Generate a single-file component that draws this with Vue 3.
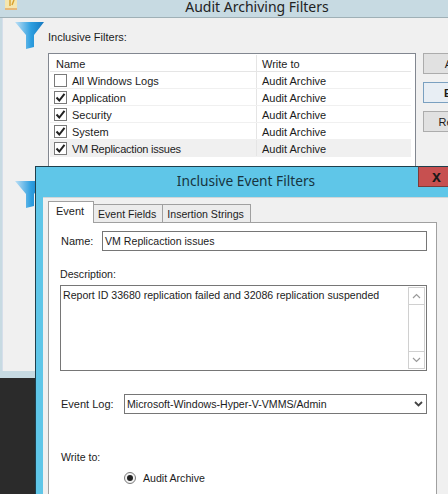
<script setup>
const rows = [
  { name: 'All Windows Logs', checked: false },
  { name: 'Application', checked: true },
  { name: 'Security', checked: true },
  { name: 'System', checked: true },
  { name: 'VM Replicaction issues', checked: true, selected: true }
]
const tabs = [
  { label: 'Event', active: true },
  { label: 'Event Fields' },
  { label: 'Insertion Strings' }
]
</script>

<template>
  <div class="desk">
    <section class="back">
      <header class="back-title">
        <svg class="doc" viewBox="0 0 12 10"><rect x="0" y="0" width="12" height="10" fill="#f4e6b0"/><path d="M5 0v6M9 0l-2 5" stroke="#d8a02c" stroke-width="1.4" fill="none"/><rect x="0" y="8" width="12" height="2" fill="#e8b878"/></svg>
        <span>Audit Archiving Filters</span>
      </header>
      <div class="back-body">
        <div class="filter-head">
          <svg class="funnel" viewBox="0 0 29 27">
            <defs>
              <linearGradient id="fg" x1="0" y1="0" x2="1" y2="0">
                <stop offset="0" stop-color="#bfe0f5"/>
                <stop offset="0.55" stop-color="#2e9fe0"/>
                <stop offset="1" stop-color="#1578c0"/>
              </linearGradient>
            </defs>
            <path d="M0 0H29L19 13V25L11 27V13Z" fill="url(#fg)"/>
          </svg>
          <span class="filter-label">Inclusive Filters:</span>
        </div>
        <div class="list-row">
          <div class="list">
            <div class="list-head">
              <span class="c1">Name</span>
              <span class="c2">Write to</span>
            </div>
            <div v-for="r in rows" :key="r.name" class="row" :class="{ sel: r.selected }">
              <span class="c1 cell-name">
                <span class="check">
                  <svg v-if="r.checked" viewBox="0 0 11 11"><path d="M1.5 5.5L4.3 8.5L9.5 1.8" fill="none" stroke="#222" stroke-width="2"/></svg>
                </span>
                <span :class="{ tight: r.selected }">{{ r.name }}</span>
              </span>
              <span class="c2">Audit Archive</span>
            </div>
          </div>
          <div class="side-btns">
            <button class="side">Add...</button>
            <button class="side focus">Edit...</button>
            <button class="side">Remove</button>
          </div>
        </div>
        <svg class="funnel second" viewBox="0 0 29 27">
          <path d="M0 0H29L19 13V25L11 27V13Z" fill="url(#fg)"/>
        </svg>
      </div>
      <div class="back-foot"></div>
    </section>

    <section class="dialog">
      <header class="dlg-title">
        <span>Inclusive Event Filters</span>
        <button class="close">x</button>
      </header>
      <div class="dlg-body">
        <nav class="tabs">
          <span v-for="t in tabs" :key="t.label" class="tab" :class="{ active: t.active }">{{ t.label }}</span>
        </nav>
        <div class="page">
          <div class="name-row">
            <label>Name:</label>
            <div class="field">VM Replicaction issues</div>
          </div>
          <label class="desc-label">Description:</label>
          <div class="area">
            <p>Report ID 33680 replication failed and 32086 replication suspended</p>
            <div class="scroll">
              <span class="sb-btn">
                <svg viewBox="0 0 9 6"><path d="M1 5L4.5 1.5L8 5" fill="none" stroke="#9a9a9a" stroke-width="1.2"/></svg>
              </span>
              <span class="sb-btn">
                <svg viewBox="0 0 9 6"><path d="M1 1L4.5 4.5L8 1" fill="none" stroke="#9a9a9a" stroke-width="1.2"/></svg>
              </span>
            </div>
          </div>
          <div class="log-row">
            <label>Event Log:</label>
            <div class="select">
              <span>Microsoft-Windows-Hyper-V-VMMS/Admin</span>
              <svg viewBox="0 0 9 6"><path d="M1 1L4.5 4.5L8 1" fill="none" stroke="#444" stroke-width="1.8"/></svg>
            </div>
          </div>
          <label class="write-label">Write to:</label>
          <div class="radio-row">
            <span class="radio"><i></i></span>
            <span>Audit Archive</span>
          </div>
        </div>
      </div>
    </section>
  </div>
</template>

<style>
html, body { margin: 0; padding: 0; background: #2b2b2b; }
</style>

<style scoped>
.desk {
  position: relative;
  width: 448px;
  height: 494px;
  overflow: hidden;
  background: #2b2b2b;
  font-family: "Liberation Sans", Arial, sans-serif;
  font-size: 11px;
  color: #1c1c1c;
}
.back {
  position: absolute;
  left: 0;
  top: -4px;
  width: 448px;
  height: 382px;
  display: flex;
  flex-direction: column;
  background: #c7dae2;
}
.back-title {
  position: relative;
  flex: none;
  height: 22px;
  display: flex;
  align-items: center;
  justify-content: center;
  padding-left: 66px;
  font-family: "Noto Sans", sans-serif;
  font-size: 14px;
  color: #222;
  border-bottom: 1px solid #9fb0b6;
  box-sizing: border-box;
}
.doc {
  position: absolute;
  left: 5px;
  top: 4px;
  width: 12px;
  height: 10px;
}
.back-body {
  position: relative;
  flex: 1;
  margin-left: 2px;
  background: #f0f0f0;
  border-left: 1px solid #d5deea;
  padding: 4px 0 0 12px;
}
.back-foot { flex: none; height: 7px; }
.filter-head {
  display: flex;
  align-items: flex-start;
  height: 31px;
}
.funnel {
  flex: none;
  width: 29px;
  height: 27px;
}
.filter-label {
  margin: 9px 0 0 4px;
}
.list-row {
  display: flex;
  margin-left: 33px;
}
.list {
  flex: none;
  width: 368px;
  height: 260px;
  box-sizing: border-box;
  border: 1px solid #828790;
  background: #fff;
  padding: 1px 4px 0 1px;
}
.list-head, .row {
  display: flex;
  height: 17px;
  line-height: 18px;
  box-sizing: border-box;
}
.list-head { border-bottom: 1px solid #e5e5e5; }
.row { border-bottom: 1px solid #f0f0f0; }
.row.sel { background: #f0f0f0; }
.c1 {
  flex: none;
  width: 207px;
  padding-left: 6px;
  box-sizing: border-box;
  border-right: 1px solid #e5e5e5;
}
.c2 { padding-left: 5px; }
.cell-name {
  display: flex;
  align-items: center;
  gap: 5px;
  padding-left: 4px;
  padding-top: 1px;
}
.tight { letter-spacing: -0.22px; }
.check {
  flex: none;
  width: 13px;
  height: 13px;
  box-sizing: border-box;
  border: 1px solid #7a7a7a;
  background: #fff;
  display: flex;
  align-items: center;
  justify-content: center;
}
.check svg { width: 11px; height: 11px; }
.side-btns {
  display: flex;
  flex-direction: column;
  gap: 8px;
  margin-left: 7px;
}
.side {
  flex: none;
  width: 72px;
  height: 21px;
  padding: 0;
  box-sizing: border-box;
  border: 1px solid #acacac;
  background: #e1e1e1;
  font: inherit;
  color: #1c1c1c;
  text-align: center;
}
.side.focus {
  border: 1px solid #7aa0c0;
  background: #e8eef4;
  font-weight: bold;
}
.second {
  position: absolute;
  left: 12px;
  top: 163px;
}
.dialog {
  position: absolute;
  left: 35px;
  top: 166px;
  width: 420px;
  height: 340px;
  box-sizing: border-box;
  border: 1px solid #1f3f4c;
  background: #5fc6e8;
  display: flex;
  flex-direction: column;
  font-size: 10.6px;
}
.dlg-title {
  position: relative;
  flex: none;
  height: 30px;
  display: flex;
  align-items: center;
  justify-content: center;
  padding: 0 0 3px 2px;
  font-family: "Noto Sans", sans-serif;
  font-size: 13.7px;
  color: #17343e;
  box-sizing: border-box;
}
.close {
  position: absolute;
  left: 382px;
  top: -1px;
  width: 32px;
  height: 21px;
  border: 1px solid #7d3b38;
  border-top-color: #1f3f4c;
  background: #c75050;
  color: #1a1a1a;
  font: bold 16px/16px "Liberation Sans", sans-serif;
  padding: 0 0 0 1px;
  text-align: left;
  text-indent: 12px;
}
.dlg-body {
  flex: 1;
  margin-left: 7px;
  background: #f0f0f0;
  padding: 4px 17px 0 5px;
  display: flex;
  flex-direction: column;
  border-top: 1px solid #d0d6d8;
}
.tabs {
  display: flex;
  align-items: flex-end;
  height: 21px;
  flex: none;
  margin-bottom: -1px;
  position: relative;
  z-index: 1;
}
.tab {
  height: 19px;
  line-height: 18px;
  padding: 0 6px 0 4px;
  box-sizing: border-box;
  border: 1px solid #a0a0a0;
  border-left: 0;
  background: #ececec;
  color: #1c1c1c;
}
.tab.active {
  height: 22px;
  width: 46px;
  padding: 0 0 0 7px;
  line-height: 19px;
  background: #fff;
  border: 1px solid #a0a0a0;
  border-bottom: 0;
  font-size: 11px;
}
.page {
  flex: 1;
  border: 1px solid #a0a0a0;
  background: #fff;
  padding: 8px 9px 0 11px;
  box-sizing: border-box;
}
.name-row {
  display: flex;
  align-items: center;
  padding-left: 1px;
  height: 20px;
}
.name-row label { width: 41px; flex: none; font-size: 11px; }
.field {
  flex: 1;
  height: 20px;
  line-height: 18px;
  box-sizing: border-box;
  border: 1px solid #767676;
  padding-left: 2px;
}
.desc-label {
  display: block;
  margin-top: 16px;
  height: 18px;
  line-height: 14px;
}
.area {
  position: relative;
  height: 86px;
  box-sizing: border-box;
  border: 1px solid #767676;
  padding: 1px 2px 1px;
}
.area p { margin: 0; line-height: 16px; }
.scroll {
  position: absolute;
  right: 1px;
  top: 1px;
  bottom: 1px;
  width: 17px;
  box-sizing: border-box;
  border: 1px solid #d0d0d0;
  display: flex;
  flex-direction: column;
  justify-content: space-between;
  background: #fff;
}
.sb-btn {
  height: 16px;
  display: flex;
  align-items: center;
  justify-content: center;
  background: #fff;
}
.sb-btn:first-child { border-bottom: 1px solid #d0d0d0; }
.sb-btn:last-child { border-top: 1px solid #d0d0d0; }
.sb-btn svg { width: 9px; height: 6px; }
.log-row {
  display: flex;
  align-items: center;
  margin-top: 23px;
  padding-left: 1px;
  height: 20px;
}
.log-row label { width: 63px; flex: none; font-size: 11px; }
.select {
  flex: 1;
  height: 20px;
  box-sizing: border-box;
  border: 1px solid #767676;
  display: flex;
  align-items: center;
  justify-content: space-between;
  padding: 0 3px 0 2px;
}
.select svg { width: 9px; height: 6px; }
.write-label {
  display: block;
  margin-top: 36px;
  padding-left: 1px;
  line-height: 14px;
}
.radio-row {
  display: flex;
  align-items: center;
  gap: 7px;
  margin-top: 8px;
  padding-left: 64px;
}
.radio {
  width: 12px;
  height: 12px;
  box-sizing: border-box;
  border: 1px solid #7a7a7a;
  border-radius: 50%;
  display: flex;
  align-items: center;
  justify-content: center;
  background: #f4f4f4;
}
.radio i {
  width: 6px;
  height: 6px;
  border-radius: 50%;
  background: #222;
}
</style>
